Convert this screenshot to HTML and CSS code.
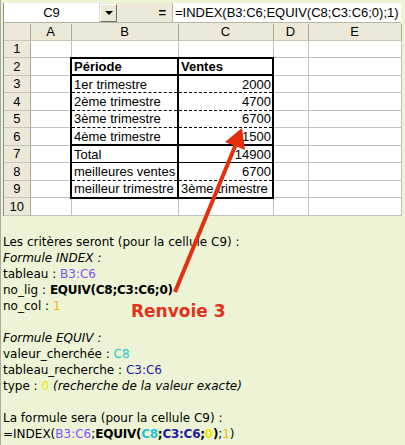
FILE: index.html
```html
<!DOCTYPE html>
<html lang="fr">
<head>
<meta charset="utf-8">
<link rel="stylesheet" href="styles.css">
</head>
<body>
<div class="page">
  <div class="strip"></div>
  <div class="excel">
    <div class="fbar">
      <div class="namebox">C9</div>
      <div class="dd"><span class="tri"></span></div>
      <div class="eq">=</div>
      <div class="finput">=INDEX(B3:C6;EQUIV(C8;C3:C6;0);1)</div>
    </div>
    <table class="sheet">
      <colgroup>
        <col class="w-rh"><col class="w-a"><col class="w-b"><col class="w-c"><col class="w-d"><col class="w-e">
      </colgroup>
      <tr class="hdr"><th></th><th>A</th><th>B</th><th>C</th><th>D</th><th>E</th></tr>
      <tr><th>1</th><td></td><td></td><td></td><td></td><td></td></tr>
      <tr><th>2</th><td></td><td class="bx top thickb lft rt b">Période</td><td class="bx top thickb rt b">Ventes</td><td></td><td></td></tr>
      <tr><th>3</th><td></td><td class="bx lft rt dash">1er trimestre</td><td class="bx rt dash num">2000</td><td></td><td></td></tr>
      <tr><th>4</th><td></td><td class="bx lft rt dash">2ème trimestre</td><td class="bx rt dash num">4700</td><td></td><td></td></tr>
      <tr><th>5</th><td></td><td class="bx lft rt dash">3ème trimestre</td><td class="bx rt dash num">6700</td><td></td><td></td></tr>
      <tr><th>6</th><td></td><td class="bx lft rt thickb">4ème trimestre</td><td class="bx rt thickb num">1500</td><td></td><td></td></tr>
      <tr><th>7</th><td></td><td class="bx lft rt solid">Total</td><td class="bx rt solid num">14900</td><td></td><td></td></tr>
      <tr><th>8</th><td></td><td class="bx lft rt dash">meilleures ventes</td><td class="bx rt dash num">6700</td><td></td><td></td></tr>
      <tr><th>9</th><td></td><td class="bx lft rt thickb">meilleur trimestre</td><td class="bx rt thickb">3ème trimestre</td><td></td><td></td></tr>
      <tr><th>10</th><td></td><td></td><td></td><td></td><td></td></tr>
    </table>
  </div>

  <div class="notes">
    <p>Les critères seront (pour la cellule C9) :</p>
    <p><em>Formule INDEX :</em></p>
    <p>tableau : <span class="purple">B3:C6</span></p>
    <p>no_lig : <strong>EQUIV(C8;C3:C6;0)</strong></p>
    <p>no_col : <span class="orange">1</span></p>
    <p class="blank"></p>
    <p><em>Formule EQUIV :</em></p>
    <p>valeur_cherchée : <span class="cyan">C8</span></p>
    <p>tableau_recherche : <span class="navy">C3:C6</span></p>
    <p>type : <span class="yellow">0</span> <em>(recherche de la valeur exacte)</em></p>
    <p class="blank"></p>
    <p>La formule sera (pour la cellule C9) :</p>
    <p>=INDEX(<span class="purple">B3:C6</span>;<strong>EQUIV(<span class="cyan">C8</span>;<span class="navy">C3:C6</span>;<span class="yellow">0</span>)</strong>;<span class="orange">1</span>)</p>
  </div>

  <div class="callout">Renvoie 3</div>
  <svg class="arrow" width="405" height="445" viewBox="0 0 405 445">
    <line x1="175" y1="292" x2="236" y2="144" stroke="#e5300f" stroke-width="4"/>
    <polygon points="242,128 225,142 245,150" fill="#e5300f"/>
  </svg>
</div>
</body>
</html>
```

FILE: styles.css
```css
* { box-sizing: border-box; }
html, body { margin: 0; padding: 0; }
body {
  background: #edf4d6;
  width: 405px;
  height: 445px;
  overflow: hidden;
}
.page {
  position: relative;
  width: 405px;
  height: 445px;
  border-left: 1px solid #a9ab9e;
}
.strip { height: 3px; }
.excel {
  margin-left: 2px;
  width: 398px;
  border-left: 1px solid #8f8f8f;
  background: #ece9d8;
}
.fbar {
  display: flex;
  height: 20px;
  border-bottom: 1px solid #b8b5a4;
  font-family: "Liberation Sans", Arial, sans-serif;
  font-size: 13px;
  color: #000;
}
.namebox {
  width: 96px;
  height: 19px;
  background: #fff;
  text-align: center;
  line-height: 19px;
  border-right: 1px solid #d8d5c5;
}
.dd {
  width: 17px;
  height: 18px;
  margin-top: 1px;
  background: #ece9d8;
  border: 1px solid;
  border-color: #fff #716f64 #716f64 #fff;
  display: flex;
  align-items: center;
  justify-content: center;
}
.tri {
  width: 0; height: 0;
  border-left: 4px solid transparent;
  border-right: 4px solid transparent;
  border-top: 4px solid #000;
}
.eq {
  width: 55px;
  text-align: right;
  padding-right: 6px;
  font-weight: bold;
  line-height: 19px;
}
.finput {
  flex: 1;
  height: 19px;
  background: #fff;
  line-height: 19px;
  padding-left: 2px;
  border-left: 1px solid #b8b5a4;
  white-space: nowrap;
  overflow: hidden;
}
.sheet {
  border-collapse: collapse;
  table-layout: fixed;
  width: 397px;
  background: #fff;
  font-family: "Liberation Sans", Arial, sans-serif;
  font-size: 13px;
  color: #000;
  margin-top: 1px;
}
.w-rh { width: 26px; }
.w-a { width: 41px; }
.w-b { width: 107px; }
.w-c { width: 95px; }
.w-d { width: 35px; }
.w-e { width: 93px; }
.sheet tr { height: 17.5px; }
.sheet tr.hdr { height: 16px; }
.sheet th {
  background: #ece9d8;
  font-weight: normal;
  border-right: 1px solid #aca899;
  border-bottom: 1px solid #c9c6b5;
  padding: 0;
  text-align: center;
  line-height: 15px;
}
.sheet td {
  border-right: 1px solid #c0c0c0;
  border-bottom: 1px solid #c0c0c0;
  padding: 0 1px 0 2px;
  white-space: nowrap;
  overflow: hidden;
  line-height: 15px;
}
.sheet td.lft { border-left: 2px solid #000; }
.sheet td.rt { border-right: 2px solid #000; }
.sheet td.top { border-top: 2px solid #000; }
.sheet td.thickb { border-bottom: 2px solid #000; }
.sheet td.dash { border-bottom: 1px dashed #000; }
.sheet td.solid { border-bottom: 1px solid #000; }
.sheet td.b { font-weight: bold; }
.sheet td.num { text-align: right; }

.notes {
  margin-top: 18px;
  padding-left: 2px;
  font-family: "DejaVu Sans", Verdana, sans-serif;
  font-size: 12px;
  color: #000;
}
.notes p {
  margin: 0;
  height: 16px;
  line-height: 16px;
  white-space: nowrap;
}
.notes strong { letter-spacing: -0.25px; }
.purple { color: #8050f6; }
.orange { color: #f5b313; }
.cyan { color: #1fc6d2; }
.navy { color: #1c1ca0; }
.yellow { color: #f1e600; }

.callout {
  position: absolute;
  left: 130px;
  top: 299px;
  font-family: "DejaVu Sans", Verdana, sans-serif;
  font-weight: bold;
  font-size: 17px;
  line-height: 24px;
  color: #e2321b;
  white-space: nowrap;
}
.arrow {
  position: absolute;
  left: -1px;
  top: 0;
  pointer-events: none;
}
```
